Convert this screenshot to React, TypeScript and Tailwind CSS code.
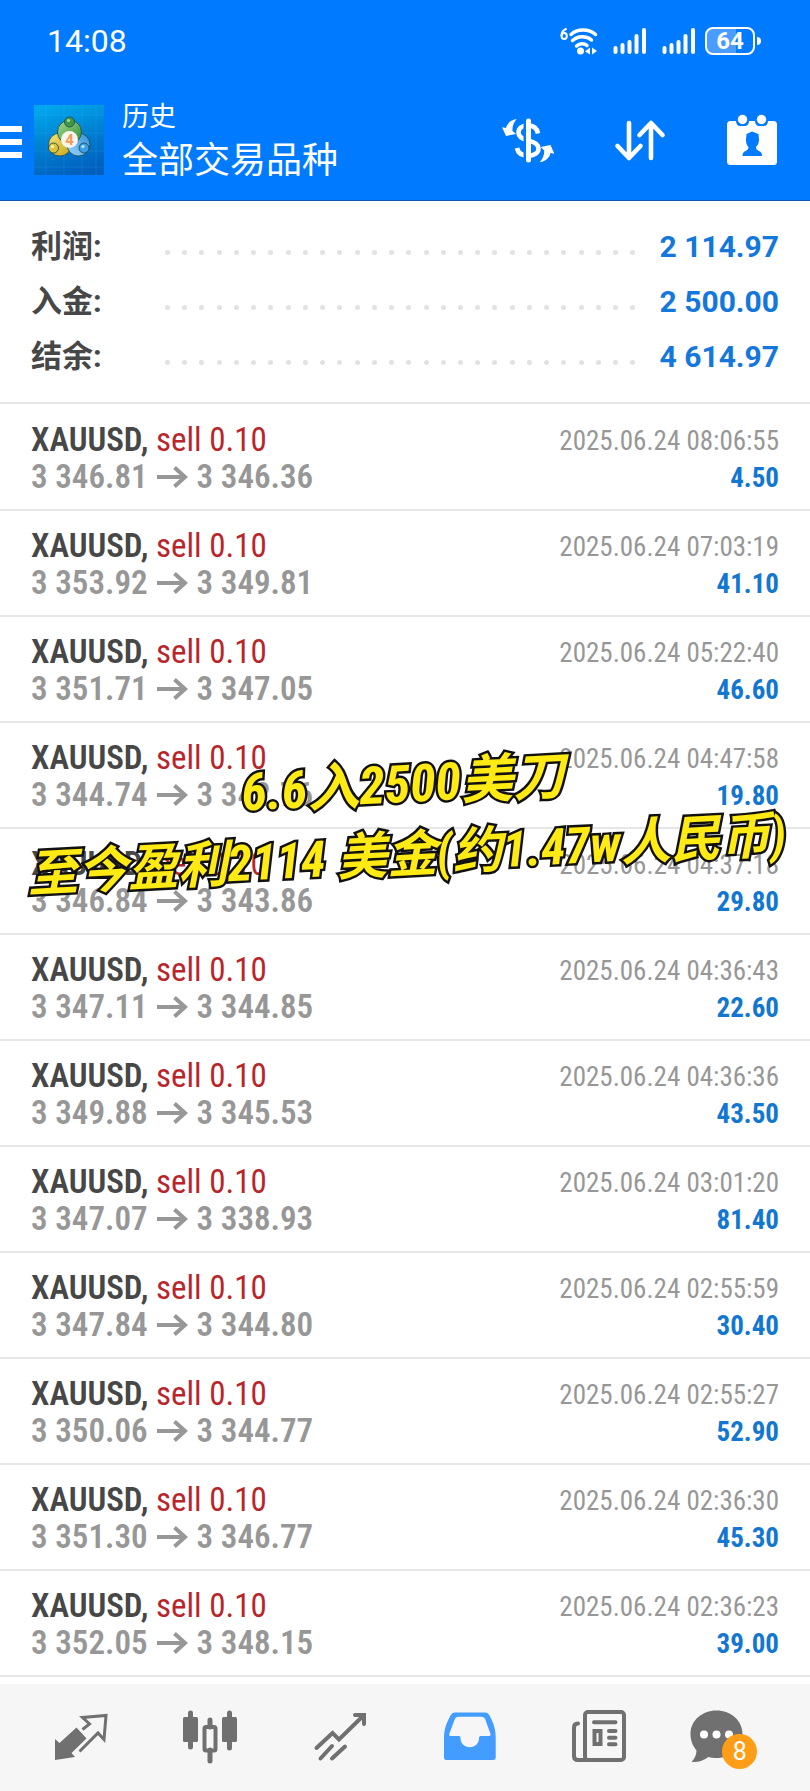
import type { ReactNode } from 'react';

interface Deal {
    open: string;
    close: string;
    time: string;
    profit: string;
}

const summary = [
    { label: '利润:', value: '2 114.97' },
    { label: '入金:', value: '2 500.00' },
    { label: '结余:', value: '4 614.97' },
];

const deals: Deal[] = [
    { open: '3 346.81', close: '3 346.36', time: '2025.06.24 08:06:55', profit: '4.50' },
    { open: '3 353.92', close: '3 349.81', time: '2025.06.24 07:03:19', profit: '41.10' },
    { open: '3 351.71', close: '3 347.05', time: '2025.06.24 05:22:40', profit: '46.60' },
    { open: '3 344.74', close: '3 342.76', time: '2025.06.24 04:47:58', profit: '19.80' },
    { open: '3 346.84', close: '3 343.86', time: '2025.06.24 04:37:18', profit: '29.80' },
    { open: '3 347.11', close: '3 344.85', time: '2025.06.24 04:36:43', profit: '22.60' },
    { open: '3 349.88', close: '3 345.53', time: '2025.06.24 04:36:36', profit: '43.50' },
    { open: '3 347.07', close: '3 338.93', time: '2025.06.24 03:01:20', profit: '81.40' },
    { open: '3 347.84', close: '3 344.80', time: '2025.06.24 02:55:59', profit: '30.40' },
    { open: '3 350.06', close: '3 344.77', time: '2025.06.24 02:55:27', profit: '52.90' },
    { open: '3 351.30', close: '3 346.77', time: '2025.06.24 02:36:30', profit: '45.30' },
    { open: '3 352.05', close: '3 348.15', time: '2025.06.24 02:36:23', profit: '39.00' },
];

const dots = Array.from({ length: 28 }, (_, i) => i);

function Signal() {
    return (
        <svg className="h-7 w-[34px]" viewBox="0 0 34 28" stroke="currentColor" strokeWidth={4} strokeLinecap="round">
            <path d="M2.5 21v4M9.5 18v7M16.5 15v10M23.5 9v16M31 3v22" />
        </svg>
    );
}

function StatusBar() {
    return (
        <div className="flex h-20 items-center justify-between pt-0.5 pr-[49px] pl-[47px]">
            <span className="text-[32px] leading-10">14:08</span>
            <div className="flex items-center gap-[15px]">
                <svg className="h-7 w-[38px]" viewBox="0 0 38 28" fill="none" stroke="currentColor" strokeWidth={3.4} strokeLinecap="round">
                    <path d="M6 2C2.5 3.500 1.500 6 1.500 8.500" strokeWidth={2} />
                    <ellipse cx="4.200" cy="9" rx="2.600" ry="3" strokeWidth={2} />
                    <path d="M11 7.500C17 1.500 29 1.500 35.500 7.500" />
                    <path d="M12.500 13.500C18 8.500 26.500 8.500 31.500 13" />
                    <path d="M16.500 19C19.500 16 24.500 16 27 18.500" />
                    <circle cx="20.500" cy="24" r="3.500" fill="currentColor" stroke="none" />
                    <path d="M25 24.500l5-4v7zM37 24l-5-3.500v7z" fill="currentColor" stroke="none" />
                </svg>
                <Signal />
                <Signal />
                <div className="-ml-1.5 flex items-center gap-0.5">
                    <div className="flex h-7 w-[50px] items-center justify-center rounded-lg border-2 border-white bg-linear-to-r from-[#4a9dff] from-64% to-[#007bff] to-64% text-2xl leading-6 font-bold">
                        64
                    </div>
                    <div className="h-2 w-1 rounded-r bg-white" />
                </div>
            </div>
        </div>
    );
}

function AppLogo() {
    return (
        <svg className="size-[70px] shrink-0" viewBox="0 0 70 70">
            <defs>
                <linearGradient id="logo-bg" x1="0.3" y1="0" x2="0.6" y2="1">
                    <stop offset="0" stopColor="#00a6ec" />
                    <stop offset="0.5" stopColor="#007fd0" />
                    <stop offset="1" stopColor="#005fbd" />
                </linearGradient>
                <linearGradient id="logo-green" x1="0" y1="0" x2="1" y2="1">
                    <stop offset="0" stopColor="#a5dc8c" />
                    <stop offset="1" stopColor="#2f8a35" />
                </linearGradient>
                <linearGradient id="logo-yellow" x1="0" y1="0" x2="1" y2="1">
                    <stop offset="0" stopColor="#f4e67c" />
                    <stop offset="1" stopColor="#c9a415" />
                </linearGradient>
                <linearGradient id="logo-blue" x1="1" y1="0" x2="0" y2="1">
                    <stop offset="0" stopColor="#2d8edb" />
                    <stop offset="1" stopColor="#9dd8ff" />
                </linearGradient>
            </defs>
            <rect width="70" height="70" fill="url(#logo-bg)" />
            <path d="M12 0v70M30 0v70M48 0v70M62 0v70M0 10h70M0 28h70M0 46h70M0 62h70" stroke="#5cc4ff" strokeWidth="0.6" opacity="0.25" />
            <g stroke="#1d4f58" strokeWidth="0.9">
                <circle cx="26" cy="39.500" r="11.500" fill="url(#logo-yellow)" />
                <circle cx="44.500" cy="39.500" r="11.500" fill="url(#logo-blue)" />
                <circle cx="35.500" cy="27" r="12" fill="url(#logo-green)" />
                <circle cx="19.500" cy="43" r="5" fill="#dfc23c" />
                <circle cx="50" cy="43" r="5" fill="#3f9fe6" />
                <circle cx="35.500" cy="17" r="5" fill="#3f9747" />
            </g>
            <circle cx="18.500" cy="41.500" r="1.600" fill="#fff6b8" />
            <circle cx="49" cy="41.500" r="1.600" fill="#bfe6ff" />
            <circle cx="34.500" cy="15.500" r="1.600" fill="#a8dd9c" />
            <circle cx="35.500" cy="34.500" r="8.500" fill="#f8f5ee" />
            <text x="35.500" y="40" textAnchor="middle" fontSize="15" fontWeight="700" fill="#f39a58">
                4
            </text>
        </svg>
    );
}

function HeaderBar() {
    return (
        <header className="border-b border-[#1059ae] bg-[#007bff] text-white">
            <StatusBar />
            <div className="flex h-[120px] items-center pr-7">
                <button type="button" aria-label="菜单" className="mt-1 mr-3 flex w-[22px] shrink-0 flex-col gap-[7px]">
                    <span className="h-1.5 bg-white" />
                    <span className="h-1.5 bg-white" />
                    <span className="h-1.5 bg-white" />
                </button>
                <AppLogo />
                <div className="ml-[18px] flex-1 pt-1.5">
                    <p className="text-[27px] leading-9">历史</p>
                    <h1 className="text-[36px] leading-[52px] whitespace-nowrap">全部交易品种</h1>
                </div>
                <div className="flex gap-[52px]">
                    <button type="button" aria-label="交易品种">
                        <svg className="size-[60px]" viewBox="0 0 60 60" fill="none">
                            <path
                                d="M40 23.500C39 17.500 35 15.500 30 15.500C24 15.500 20.500 18 20.500 22.500C20.500 27 24 29 30 30.500C37 32 40.500 34 40.500 38.500C40.500 43 36 45.500 30 45.500C24 45.500 20 43.500 19 38"
                                stroke="currentColor"
                                strokeWidth={4.6}
                            />
                            <path d="M27 11v38" stroke="#007bff" strokeWidth={3} />
                            <path d="M30.500 11v39" stroke="currentColor" strokeWidth={5} strokeLinecap="round" />
                            <g fill="currentColor">
                                <path d="M18.700 9C12 10 9 14 8 18L4 17.300L8 26L18 24L14.500 21C14 16 16 12 18.700 9Z" />
                                <path d="M41.700 52.300C48.500 51 51.500 47.500 52.500 43L56.300 43.700L52.500 35L42.700 37L46.200 40.500C46.500 45 44.500 49 41.700 52.300Z" />
                            </g>
                        </svg>
                    </button>
                    <button type="button" aria-label="排序">
                        <svg className="size-[60px]" viewBox="0 0 60 60" fill="none" stroke="currentColor" strokeWidth={4.6} strokeLinecap="round" strokeLinejoin="round">
                            <path d="M19 13v34M7.500 36L19 48L30.500 36M41 48V14M29.500 25L41 13L52.500 25" />
                        </svg>
                    </button>
                    <button type="button" aria-label="日期">
                        <svg className="size-[60px]" viewBox="0 0 60 60">
                            <rect x="5" y="11" width="50" height="44" rx="3.500" fill="currentColor" />
                            <path
                                d="M14 11c0 3 2 5 4 5h5c2 0 4-2 4-5zM33 11c0 3 2 5 4 5h5c2 0 4-2 4-5zM24.500 24L30 21.500L36.500 24L37 29.500C37 33 36 35 34 37C34 39 35 40 37 41C39 42 40 43 40 46H20.500C20.500 43 21.500 42 23.500 41C25.500 40 26.500 39 26.500 37C24.500 35 24 33 24 29.500Z"
                                fill="#007bff"
                            />
                            <circle cx="20.500" cy="9.500" r="4.700" fill="currentColor" />
                            <circle cx="39.500" cy="9.500" r="4.700" fill="currentColor" />
                        </svg>
                    </button>
                </div>
            </div>
        </header>
    );
}

function Summary() {
    return (
        <dl className="flex flex-col border-b-2 border-[#e6e6e6] px-[31px] py-[18px]">
            {summary.map((row) => (
                <div key={row.label} className="flex h-[55px] items-center">
                    <dt className="w-[134px] text-[31px] leading-10 font-bold text-[#474747]">{row.label}</dt>
                    <div aria-hidden className="mt-3 mr-6 flex flex-1 justify-between">
                        {dots.map((i) => (
                            <span key={i} className="size-[5px] rounded-full bg-[#e2e2e2]" />
                        ))}
                    </div>
                    <dd className="text-[30px] leading-10 font-bold text-[#1477db]">{row.value}</dd>
                </div>
            ))}
        </dl>
    );
}

function DealRow({ deal }: { deal: Deal }) {
    return (
        <li className="flex h-[106px] justify-between border-b-2 border-[#e6e6e6] px-[31px] pt-4 font-['Roboto_Condensed','Roboto',sans-serif]">
            <div className="text-[33px] leading-[37px] whitespace-nowrap">
                <p className="text-[#b8262b]">
                    <span className="font-semibold text-[#474747]">XAUUSD,</span> sell 0.10
                </p>
                <p className="flex items-center gap-[9px] font-semibold text-[#979797]">
                    {deal.open}
                    <svg className="h-6 w-[31px]" viewBox="0 0 31 24" fill="none" stroke="currentColor" strokeWidth={4}>
                        <path d="M0 12h28M17.500 2.500L28 12L17.500 21.500" />
                    </svg>
                    {deal.close}
                </p>
            </div>
            <div className="pt-0.5 text-right text-[27px] leading-[37px] whitespace-nowrap">
                <p className="text-[#979797]">{deal.time}</p>
                <p className="font-bold text-[#1477cf]">{deal.profit}</p>
            </div>
        </li>
    );
}

function Caption() {
    return (
        <div className="pointer-events-none absolute inset-x-0 top-[346px] -rotate-3 text-center font-['Roboto_Condensed','Noto_Sans_CJK_SC',sans-serif] leading-[70px] font-bold whitespace-nowrap text-[#ffea14] italic [-webkit-text-stroke:5px_#111] [paint-order:stroke_fill]">
            <p className="text-[52px]">6.6入2500美刀</p>
            <p className="text-[50px]">至今盈利2114 美金(约1.47w人民币)</p>
        </div>
    );
}

function Tab({ label, active, children }: { label: string; active?: boolean; children: ReactNode }) {
    return (
        <a href="#" aria-label={label} className={active ? 'flex justify-center text-[#439cff]' : 'flex justify-center text-[#707070]'}>
            {children}
        </a>
    );
}

function TabBar() {
    return (
        <nav className="grid h-[107px] grid-cols-6 items-center bg-[#f6f6f6] px-4 pb-0.5">
            <Tab label="行情">
                <svg className="size-[60px]" viewBox="0 0 60 60">
                    <path d="M4 32L8.500 36L25.500 20.500L35.500 31.500L20.500 46L24 50L4 53Z" fill="currentColor" />
                    <path d="M31.500 22.500L38.500 17L31.500 10.500L55 8.500L53 32.500L47 26L28.500 44.500" fill="none" stroke="currentColor" strokeWidth={3} />
                </svg>
            </Tab>
            <Tab label="图表">
                <svg className="size-[60px]" viewBox="0 0 60 60">
                    <path d="M10.500 6v34M30 13v7M30 43v11M49.500 6v35" stroke="currentColor" strokeWidth={5} strokeLinecap="round" />
                    <rect x="3" y="10" width="15" height="25" rx="1.500" fill="currentColor" />
                    <rect x="42" y="10" width="15" height="25" rx="1.500" fill="currentColor" />
                    <rect x="24.500" y="20" width="11" height="23.500" rx="1.500" fill="none" stroke="currentColor" strokeWidth={4} />
                </svg>
            </Tab>
            <Tab label="交易">
                <svg className="size-[60px]" viewBox="0 0 60 60" fill="none" stroke="currentColor" strokeWidth={4} strokeLinecap="round">
                    <path d="M6.500 41L22.500 26L29 32.500L53 9M45 8H54V17M10.500 51.500L22 39M22 51.500L35 39.500" />
                </svg>
            </Tab>
            <Tab label="历史" active>
                <svg className="size-[60px]" viewBox="0 0 60 60">
                    <path
                        fillRule="evenodd"
                        fill="currentColor"
                        d="M15 5.500H45C47 5.500 48.500 6.500 49.500 8.500C53.500 16 55.700 22 55.700 31V50.500Q55.700 53 53 53H6.500Q4 53 4 50.500V31C4 22 6.500 16 10.500 8.500C11.500 6.500 13 5.500 15 5.500ZM18.500 9.700C16.500 9.700 15.500 10.500 14.700 12.500L9.200 27Q8.800 29 10.500 29H19Q20.500 29 20.500 31C20.500 36.500 24.500 40.300 29.800 40.300C35 40.300 39 36.500 39 31Q39 29 40.500 29H49Q51 29 50.500 27L45.300 12.500C44.500 10.500 43.500 9.700 41.500 9.700Z"
                    />
                </svg>
            </Tab>
            <Tab label="新闻">
                <svg className="size-[60px]" viewBox="0 0 60 60" fill="none" stroke="currentColor" strokeWidth={4} strokeLinecap="round">
                    <rect x="16" y="5" width="39" height="48" rx="3" />
                    <path d="M9 16.500C6.500 16.500 5 18 5 20.500V49C5 51.500 6.500 53 9 53H17M25 15.300H46.500M40 24H46.500M40 30.700H46.500M40 37.300H46.500" />
                    <rect x="25.500" y="24" width="6" height="13" />
                </svg>
            </Tab>
            <Tab label="消息">
                <div className="relative">
                    <svg className="h-[60px] w-20" viewBox="-10 0 80 60">
                        <path
                            d="M17.500 3.500C32 3.500 43.500 13.500 43.500 27C43.500 41 32 51 17.500 51C14.500 51 12 50.700 9.500 50C5 53.500-1 55.500-7.500 55C-4.500 52-2.500 48-2.500 43.500C-6 39-8.500 34-8.500 27C-8.500 13.500 3 3.500 17.500 3.500Z"
                            fill="currentColor"
                        />
                        <g fill="#fff">
                            <circle cx="5" cy="27.500" r="4" />
                            <circle cx="17.500" cy="27.500" r="4" />
                            <circle cx="30" cy="27.500" r="4" />
                        </g>
                    </svg>
                    <span className="absolute right-3 -bottom-0.5 flex size-[35px] items-center justify-center rounded-full bg-[#ff9d17] text-[25px] leading-none text-white">
                        8
                    </span>
                </div>
            </Tab>
        </nav>
    );
}

export default function App() {
    return (
        <div className="min-h-screen overflow-hidden bg-white font-['Roboto','Noto_Sans_CJK_SC',sans-serif]">
            <HeaderBar />
            <main>
                <Summary />
                <div className="relative pt-px pb-[7px]">
                    <ul>
                        {deals.map((deal) => (
                            <DealRow key={deal.time} deal={deal} />
                        ))}
                    </ul>
                    <Caption />
                </div>
            </main>
            <TabBar />
        </div>
    );
}
